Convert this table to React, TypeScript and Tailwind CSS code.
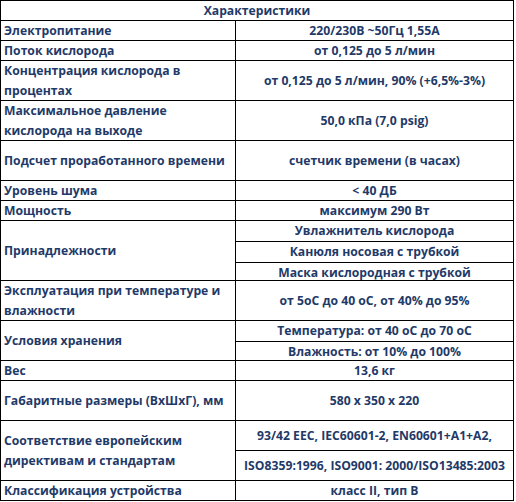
type Row = {
  label: string[];
  values: string[];
  h: string;
};

const rows: Row[] = [
  { label: ["Электропитание"], values: ["220/230В ~50Гц 1,55А"], h: "h-[20px]" },
  { label: ["Поток кислорода"], values: ["от 0,125 до 5 л/мин"], h: "h-[20px]" },
  {
    label: ["Концентрация кислорода в", "процентах"],
    values: ["от 0,125 до 5 л/мин, 90% (+6,5%-3%)"],
    h: "h-[40px]",
  },
  {
    label: ["Максимальное давление", "кислорода на выходе"],
    values: ["50,0 кПа (7,0 psig)"],
    h: "h-[40px]",
  },
  { label: ["Подсчет проработанного времени"], values: ["счетчик времени (в часах)"], h: "h-[40px]" },
  { label: ["Уровень шума"], values: ["< 40 ДБ"], h: "h-[20px]" },
  { label: ["Мощность"], values: ["максимум 290 Вт"], h: "h-[20px]" },
  {
    label: ["Принадлежности"],
    values: ["Увлажнитель кислорода", "Канюля носовая с трубкой", "Маска кислородная с трубкой"],
    h: "h-[60px]",
  },
  {
    label: ["Эксплуатация при температуре и", "влажности"],
    values: ["от 5оС до 40 оС, от 40% до 95%"],
    h: "h-[40px]",
  },
  {
    label: ["Условия хранения"],
    values: ["Температура: от 40 оС до 70 оС", "Влажность: от 10% до 100%"],
    h: "h-[40px]",
  },
  { label: ["Вес"], values: ["13,6 кг"], h: "h-[20px]" },
  { label: ["Габаритные размеры (ВхШхГ), мм"], values: ["580 x 350 x 220"], h: "h-[40px]" },
  {
    label: ["Соответствие европейским", "директивам и стандартам"],
    values: ["93/42 EEC, IEC60601-2, EN60601+A1+A2,", "ISO8359:1996, ISO9001: 2000/ISO13485:2003"],
    h: "h-[60px]",
  },
  { label: ["Классификация устройства"], values: ["класс II, тип B"], h: "h-[20px]" },
];

export default function App() {
  return (
    <div className="w-[516px] h-[502px] bg-white font-['Open_Sans',sans-serif] text-[12.2px] font-bold text-[#1f3a68] leading-[20px]">
      <div className="w-[514px] border-l border-t border-r border-black">
        <div className="h-[20px] border-b border-black flex items-center justify-center">
          Характеристики
        </div>
        {rows.map((r, i) => (
          <div key={i} className={`flex border-b border-black ${r.h}`}>
            <div className="w-[235px] border-r border-black pl-[3px] flex flex-col justify-center">
              {r.label.map((l, j) => (
                <div key={j} className="whitespace-nowrap">
                  {l}
                </div>
              ))}
            </div>
            <div className="flex-1 flex flex-col">
              {r.values.map((v, j) => (
                <div
                  key={j}
                  className={`flex-1 flex items-center justify-center whitespace-nowrap ${
                    j < r.values.length - 1 ? "border-b border-black" : ""
                  }`}
                >
                  {v}
                </div>
              ))}
            </div>
          </div>
        ))}
      </div>
    </div>
  );
}
